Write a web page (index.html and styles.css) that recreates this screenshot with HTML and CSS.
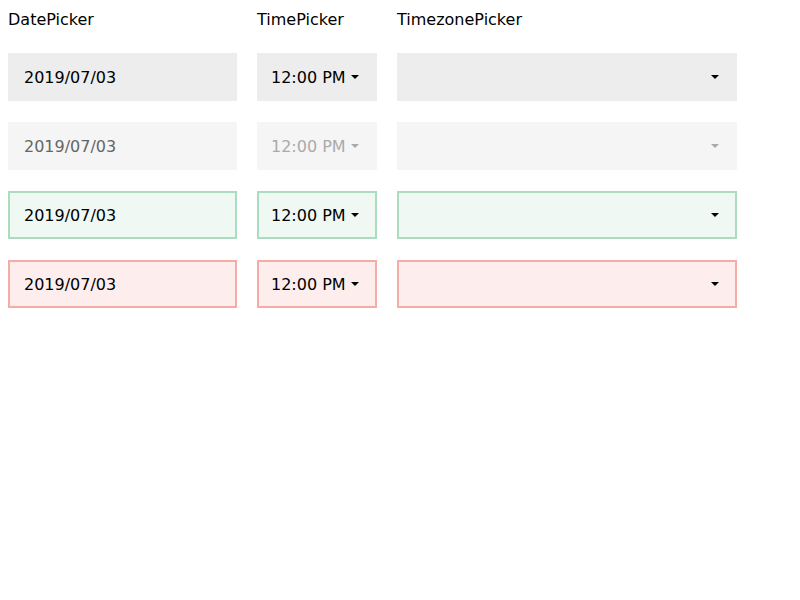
FILE: index.html
```html
<!DOCTYPE html>
<html>
<head>
<meta charset="utf-8">
<link rel="stylesheet" href="styles.css">
</head>
<body>
<div class="grid">
  <div class="label">DatePicker</div>
  <div class="label">TimePicker</div>
  <div class="label">TimezonePicker</div>

  <div class="field date">2019/07/03</div>
  <div class="field time">12:00 PM<span class="caret"></span></div>
  <div class="field tz"><span class="caret"></span></div>

  <div class="field date disabled-date">2019/07/03</div>
  <div class="field time disabled">12:00 PM<span class="caret"></span></div>
  <div class="field tz disabled"><span class="caret"></span></div>

  <div class="field date success">2019/07/03</div>
  <div class="field time success">12:00 PM<span class="caret"></span></div>
  <div class="field tz success"><span class="caret"></span></div>

  <div class="field date error">2019/07/03</div>
  <div class="field time error">12:00 PM<span class="caret"></span></div>
  <div class="field tz error"><span class="caret"></span></div>
</div>
</body>
</html>
```
FILE: styles.css
```css
body {
  margin: 8px;
  font-family: "DejaVu Sans", sans-serif;
  font-size: 16px;
  color: #000;
  background: #fff;
}
.grid {
  display: grid;
  grid-template-columns: 229px 120px 340px;
  column-gap: 20px;
  row-gap: 21px;
  grid-template-rows: 24px;
}
.label {
  line-height: 24px;
}
.field {
  box-sizing: border-box;
  height: 48px;
  background: #ededed;
  border: 2px solid transparent;
  display: flex;
  align-items: center;
  padding-left: 14px;
}
.time {
  padding-left: 12px;
}
.tz {
  justify-content: flex-end;
  padding-right: 16px;
}
.caret {
  display: inline-block;
  width: 0;
  height: 0;
  border-left: 4px solid transparent;
  border-right: 4px solid transparent;
  border-top: 4px solid currentColor;
  margin-left: 5px;
}
.disabled {
  background: #f5f5f5;
  color: #aaaaaa;
}
.disabled-date {
  background: #f5f5f5;
  color: #666666;
}
.success {
  background: #eff8f3;
  border-color: #acdcbf;
}
.error {
  background: #fdeeed;
  border-color: #f5aca6;
}
```
